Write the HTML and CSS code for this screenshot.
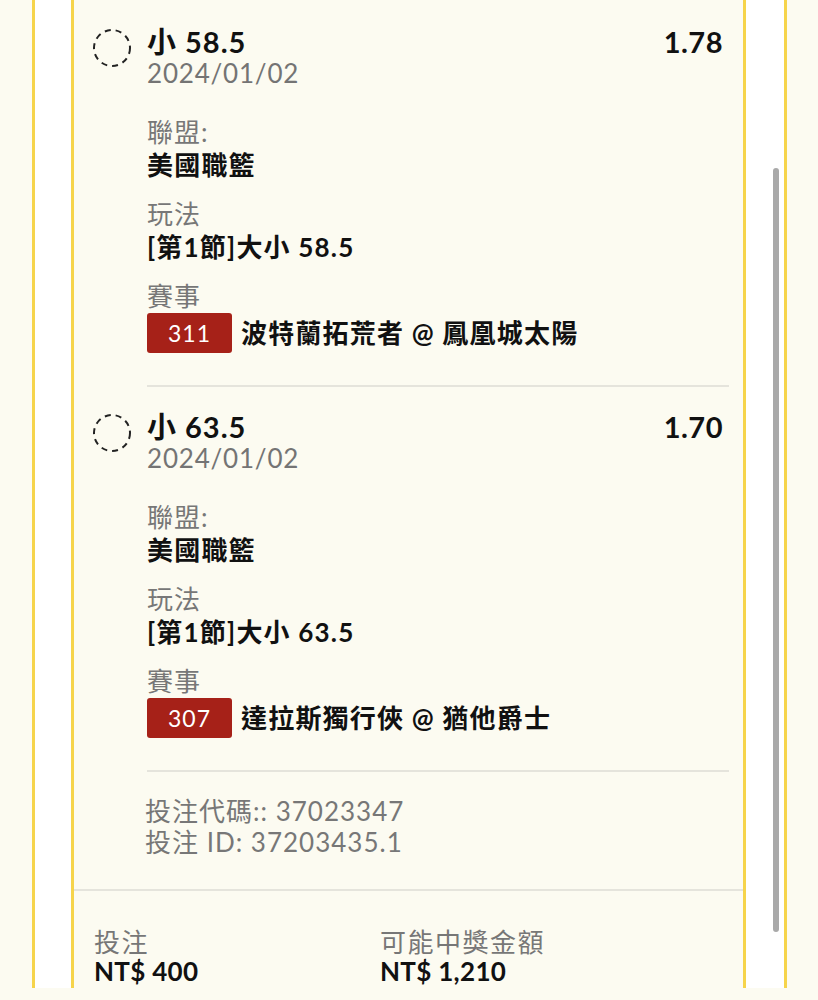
FILE: index.html
```html
<!DOCTYPE html>
<html lang="zh-Hant">
<head>
<meta charset="utf-8">
<title>投注單</title>
<link rel="stylesheet" href="styles.css">
</head>
<body>
<div class="frame">
  <div class="card">
    <div class="bet">
      <svg class="status" width="40" height="40" viewBox="0 0 40 40"><circle cx="20" cy="20" r="18" fill="none" stroke="#222" stroke-width="2" stroke-dasharray="6 5"/></svg>
      <div class="bet-body">
        <div class="bet-head">
          <div class="pick">小 58.5</div>
          <div class="odds">1.78</div>
        </div>
        <div class="date">2024/01/02</div>
        <div class="field">
          <div class="label">聯盟:</div>
          <div class="value">美國職籃</div>
        </div>
        <div class="field">
          <div class="label">玩法</div>
          <div class="value">[第1節]大小 58.5</div>
        </div>
        <div class="field">
          <div class="label">賽事</div>
          <div class="match"><span class="badge">311</span><span class="value">波特蘭拓荒者 @ 鳳凰城太陽</span></div>
        </div>
      </div>
    </div>
    <div class="bet">
      <svg class="status" width="40" height="40" viewBox="0 0 40 40"><circle cx="20" cy="20" r="18" fill="none" stroke="#222" stroke-width="2" stroke-dasharray="6 5"/></svg>
      <div class="bet-body">
        <div class="bet-head">
          <div class="pick">小 63.5</div>
          <div class="odds">1.70</div>
        </div>
        <div class="date">2024/01/02</div>
        <div class="field">
          <div class="label">聯盟:</div>
          <div class="value">美國職籃</div>
        </div>
        <div class="field">
          <div class="label">玩法</div>
          <div class="value">[第1節]大小 63.5</div>
        </div>
        <div class="field">
          <div class="label">賽事</div>
          <div class="match"><span class="badge">307</span><span class="value">達拉斯獨行俠 @ 猶他爵士</span></div>
        </div>
      </div>
    </div>
    <div class="ids">
      <div>投注代碼:: 37023347</div>
      <div>投注 ID: 37203435.1</div>
    </div>
    <div class="totals">
      <div class="total">
        <div class="t-label">投注</div>
        <div class="t-value">NT$ 400</div>
      </div>
      <div class="total">
        <div class="t-label">可能中獎金額</div>
        <div class="t-value">NT$ 1,210</div>
      </div>
    </div>
  </div>
  <div class="scrollbar"></div>
</div>
</body>
</html>
```
FILE: styles.css
```css
html, body {
  margin: 0;
  padding: 0;
}
body {
  background: #fcfbf1;
  font-family: "Lato", "Noto Sans CJK TC", sans-serif;
  color: #111;
  height: 1000px;
  overflow: hidden;
}
.frame {
  position: relative;
  box-sizing: border-box;
  margin-left: 32px;
  width: 755px;
  height: 988px;
  background: #fff;
  border-left: 3px solid #f6d44b;
  border-right: 3px solid #f6d44b;
  padding: 0 38px 0 36px;
  overflow: hidden;
}
.card {
  box-sizing: border-box;
  height: 100%;
  background: #fcfbf1;
  border-left: 3px solid #f6d44b;
  border-right: 3px solid #f6d44b;
  padding-top: 2px;
}
.bet {
  display: flex;
  align-items: flex-start;
  padding: 0 14px 0 19px;
}
.status {
  flex: none;
  margin: 26px 15px 0 -1px;
}
.bet-body {
  flex: 1;
  padding: 23px 0 32px;
  border-bottom: 2px solid #e5e4dc;
}
.bet-head {
  display: flex;
  justify-content: space-between;
  align-items: center;
  height: 33px;
}
.pick {
  font-weight: 700;
  font-size: 29px;
  letter-spacing: 1px;
  line-height: 33px;
}
.odds {
  font-weight: 700;
  margin-right: 6px;
  font-size: 29px;
  letter-spacing: 0.5px;
  line-height: 33px;
}
.date {
  color: #747474;
  font-size: 26px;
  letter-spacing: 0.8px;
  line-height: 30px;
  margin-bottom: 28px;
}
.field + .field {
  margin-top: 16px;
}
.label {
  color: #777;
  font-size: 26px;
  letter-spacing: 1px;
  line-height: 33px;
}
.value {
  font-weight: 700;
  font-size: 26px;
  letter-spacing: 1.2px;
  line-height: 33px;
}
.match {
  display: flex;
  align-items: center;
  gap: 9px;
}
.badge {
  width: 85px;
  height: 40px;
  border-radius: 3px;
  background: #a62118;
  color: #fff;
  font-size: 23px;
  letter-spacing: 1px;
  line-height: 40px;
  text-align: center;
}
.ids {
  padding: 24px 14px 31px 71px;
  color: #777;
  font-size: 26px;
  letter-spacing: 1px;
  line-height: 31px;
  border-bottom: 2px solid #e5e4dc;
}
.totals {
  display: grid;
  grid-template-columns: 286px 1fr;
  padding: 37px 20px 0;
}
.t-label {
  color: #777;
  font-size: 26px;
  letter-spacing: 1.5px;
  line-height: 29px;
}
.t-value {
  font-weight: 700;
  font-size: 26px;
  letter-spacing: 0.3px;
  line-height: 29px;
}
.scrollbar {
  position: absolute;
  left: 738px;
  top: 168px;
  width: 6px;
  height: 764px;
  border-radius: 3px;
  background: #a9a9a9;
}
```
